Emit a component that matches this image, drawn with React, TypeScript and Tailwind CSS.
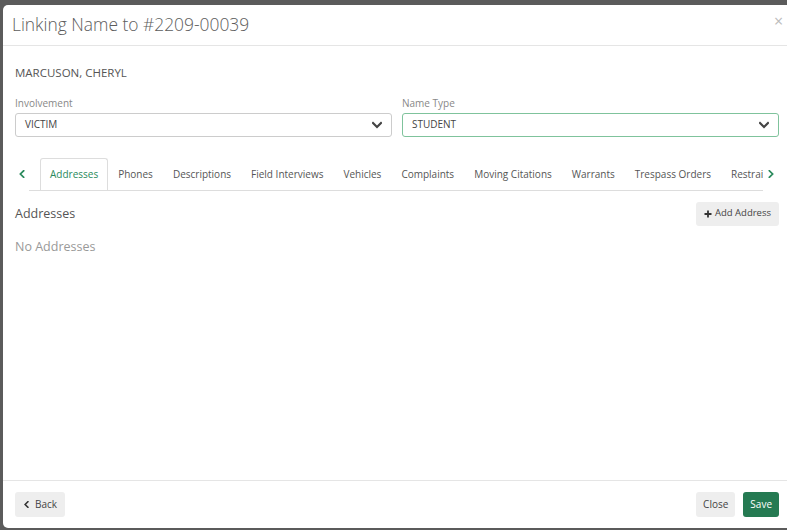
import React from "react";

const tabs = [
  "Addresses",
  "Phones",
  "Descriptions",
  "Field Interviews",
  "Vehicles",
  "Complaints",
  "Moving Citations",
  "Warrants",
  "Trespass Orders",
  "Restraining Orders",
];

function Chevron({ dir, className }: { dir: "left" | "right" | "down"; className?: string }) {
  const d =
    dir === "left"
      ? "M7 1 L3 5 L7 9"
      : dir === "right"
      ? "M3 1 L7 5 L3 9"
      : "M1 3 L5 7 L9 3";
  return (
    <svg width="10" height="10" viewBox="0 0 10 10" className={className}>
      <path d={d} fill="none" stroke="currentColor" strokeWidth="2.2" strokeLinecap="square" />
    </svg>
  );
}

export default function App() {
  return (
    <div
      className="w-[787px] h-[530px] overflow-hidden bg-[#5b5b5b] relative"
      style={{ fontFamily: '"Open Sans", "Liberation Sans", sans-serif' }}
    >
      <div className="absolute left-[3px] top-[5px] w-[800px] h-[523px] bg-white rounded-[5px] flex flex-col">
        {/* header */}
        <div className="h-[41px] border-b border-[#e5e5e5] flex items-center pl-[9px] relative">
          <div className="text-[17.4px] text-[#5c5c5c] leading-none font-light">Linking Name to #2209-00039</div>
          <div className="absolute left-[771px] top-[8px] text-[#bbb] text-[16px] leading-none">×</div>
        </div>
        {/* body */}
        <div className="flex-1 ml-[12px] w-[764px]">
          <div className="text-[11.5px] text-[#555] mt-[21px] leading-none">MARCUSON, CHERYL</div>
          <div className="flex gap-[10px] mt-[19px]">
            <div className="flex-1">
              <div className="text-[10px] text-[#888] leading-none mb-[5px]">Involvement</div>
              <div className="h-[24px] border border-[#ccc] rounded-[3px] flex items-center justify-between px-[9px]">
                <span className="text-[10px] text-[#444]">VICTIM</span>
                <Chevron dir="down" className="text-[#444]" />
              </div>
            </div>
            <div className="flex-1">
              <div className="text-[10px] text-[#888] leading-none mb-[5px]">Name Type</div>
              <div className="h-[24px] border border-[#7fc39c] rounded-[3px] flex items-center justify-between px-[9px]">
                <span className="text-[10px] text-[#444]">STUDENT</span>
                <Chevron dir="down" className="text-[#444]" />
              </div>
            </div>
          </div>
          {/* tabs */}
          <div className="flex items-center mt-[21px]">
            <div className="w-[14px] flex justify-center text-[#2a8a5c]">
              <Chevron dir="left" className="w-[8px] h-[8px]" />
            </div>
            <div className="w-[734px] overflow-hidden border-b border-[#ddd] flex pl-[11px] h-[33px] whitespace-nowrap">
              {tabs.map((t, i) => (
                <div
                  key={t}
                  className={
                    i === 0
                      ? "px-[9px] h-[33px] pt-[1px] flex items-center text-[10px] text-[#2a8a5c] border border-[#ddd] border-b-white rounded-t-[3px] bg-white -mb-px shrink-0"
                      : "px-[10px] h-[33px] pt-[1px] flex items-center text-[10px] text-[#555] shrink-0"
                  }
                >
                  {t}
                </div>
              ))}
            </div>
            <div className="w-[16px] flex justify-center text-[#2a8a5c]">
              <Chevron dir="right" className="w-[8px] h-[8px]" />
            </div>
          </div>
          <div className="flex items-center justify-between mt-[11px]">
            <div className="text-[12.5px] text-[#555] mt-[2px]">Addresses</div>
            <div className="h-[24px] px-[8px] bg-[#eeeeee] rounded-[3px] flex items-center gap-[3px] text-[9.5px] text-[#444]">
              <svg width="8" height="8" viewBox="0 0 8 8">
                <path d="M4 0.5 V7.5 M0.5 4 H7.5" stroke="#333" strokeWidth="1.8" />
              </svg>
              Add Address
            </div>
          </div>
          <div className="text-[12.5px] text-[#999] mt-[12px]">No Addresses</div>
        </div>
        {/* footer */}
        <div className="h-[48px] border-t border-[#e5e5e5] -mt-px">
          <div className="h-full flex items-center justify-between ml-[12px] w-[764px]">
            <div className="h-[25px] px-[8px] bg-[#eeeeee] rounded-[3px] flex items-center gap-[5px] text-[10px] text-[#444]">
              <Chevron dir="left" className="w-[7px] h-[7px] text-[#333]" />
              Back
            </div>
            <div className="flex gap-[8px]">
              <div className="h-[25px] px-[7px] bg-[#eeeeee] rounded-[3px] flex items-center text-[10px] text-[#444]">Close</div>
              <div className="h-[25px] px-[7px] bg-[#257a52] rounded-[3px] flex items-center text-[10px] text-white">Save</div>
            </div>
          </div>
        </div>
      </div>
    </div>
  );
}
